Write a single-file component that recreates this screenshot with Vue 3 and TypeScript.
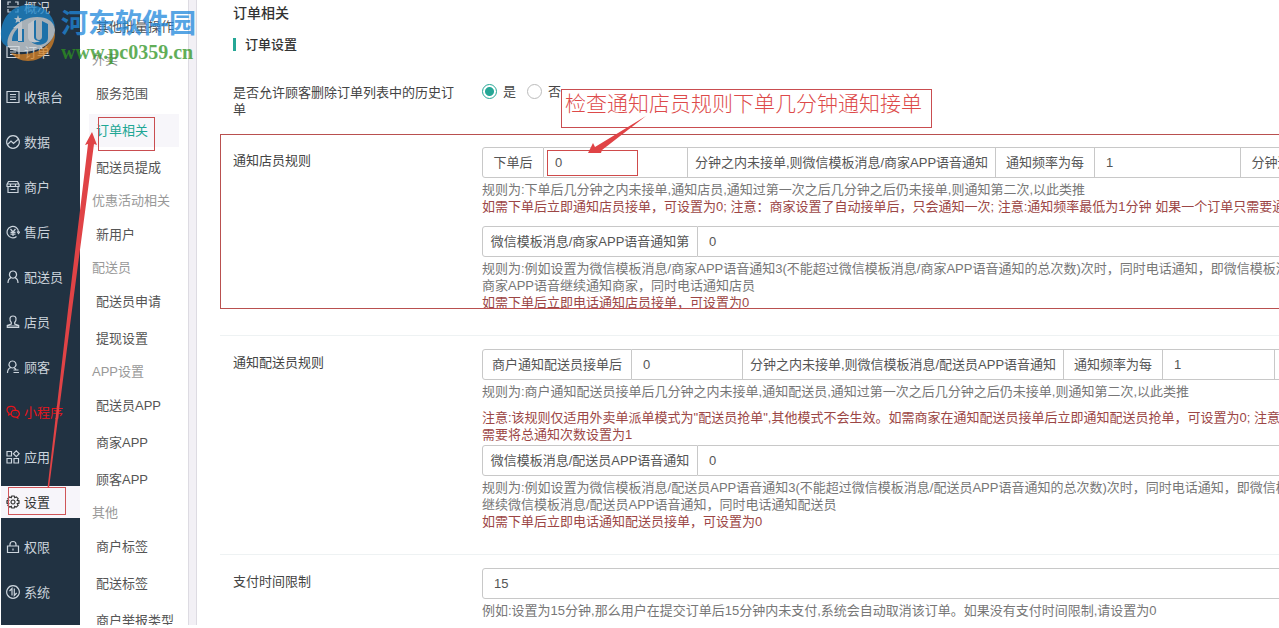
<script setup lang="ts">
interface NavItem { label: string; icon: string; state?: string }
interface SubItem { label: string; kind?: string }
interface Cell { type: 'text' | 'input'; value: string; width: number; label?: string; grow?: boolean }
interface Block { kind: 'group' | 'hint' | 'warn'; cells?: Cell[]; lines?: string[]; space?: string }
interface Row { title: string; id: string; blocks: Block[] }

const nav: NavItem[] = [
  { label: '概况', icon: 'M2 5V2h3M9 2h3v3M2 9v3h3M9 12h3V9M1 7h12' },
  { label: '订单', icon: 'M1 1.5h12v11H1zM4 4.500h6M4 7h6M4 9.500h6' },
  { label: '收银台', icon: 'M1 1.500h12v11H1zM4 4.500h6M4 7h6M4 9.500h6' },
  { label: '数据', icon: 'M7 .7a6.300 6.300 0 1 0 .01 0zM1.500 9.500L5 6l2.500 2.500L12 4.500' },
  { label: '商户', icon: 'M2.500 1.500h9l1.500 3v2H1v-2zM1 4h12M4.500 4v2.500M9.500 4v2.500M2 7v5.500h10V7M4.500 9.500h5' },
  { label: '售后', icon: 'M10.500 11.500A5.700 5.700 0 1 1 12.500 7M11 6.500l1.500 2 1.500-2M4.500 4L7 7l2.500-3M7 7v4M4.500 7.300h5M4.500 9.200h5' },
  { label: '配送员', icon: 'M7 1a3.500 3.500 0 0 1 2 6.400C8 8.200 6 8.200 5 7.400A3.500 3.500 0 0 1 7 1zM5 7.600C3 8.500 2 10.500 2 13M9 7.600c2 .9 3 2.900 3 5.400' },
  { label: '店员', icon: 'M7 1c4 0 3.500 4.500 1.700 6.500v1.500l4 1.500v2H1.300v-2l4-1.500V7.500C3.500 5.500 3 1 7 1zM1.300 11h11.400' },
  { label: '顾客', icon: 'M6.500 1a3.500 3.500 0 1 1-.01 0zM4.500 7.500C2.500 8.500 1.500 10.500 1.500 13M8 7.500l2 2M7.500 10h5M7.500 12.500h5.500' },
  { label: '小程序', icon: 'M9.500 5C9 0 1 .5 1 5c0 1.500.8 2.600 2 3.300L2.700 10l2-1M9 5.200c5 0 5.500 5 2.500 6.500l.3 1.300-1.800-.8C3.500 12.500 4 5.500 9 5.200zM3.800 4h.5M6.500 4H7M7.700 8h.5M10.500 8h.5' },
  { label: '应用', icon: 'M1 1.500h4.500v4.500H1zM1 8.500h4.500v4.500H1zM8 8.500h4.500v4.500H8zM10.300.8l2.900 2.900-2.900 2.900-2.900-2.900z' },
  { label: '设置', icon: 'M5.800 1h2.400l.5 1.700 1.600-.8 1.800 1.800-.9 1.600 1.800.5v2.400l-1.800.5.9 1.600-1.800 1.800-1.600-.8L8.200 13H5.800l-.5-1.700-1.600.8-1.800-1.800.9-1.600L1 8.200V5.800l1.800-.5-.9-1.600 1.800-1.800 1.600.8zM7 5a2 2 0 1 0 .01 0z', state: 'active' },
  { label: '权限', icon: 'M1.500 6h11v6.500h-11zM4 6V4.500a3 3 0 0 1 6 0V6M7 8.500v2' },
  { label: '系统', icon: 'M7 .7a6.300 6.300 0 1 0 .01 0zM6 10.500v-7L3.500 6M8.300 3.500v7L10.700 8' },
]

const sub: SubItem[] = [
  { label: '其他批量操作' },
  { label: '外卖', kind: 'head' },
  { label: '服务范围' },
  { label: '订单相关', kind: 'current' },
  { label: '配送员提成' },
  { label: '优惠活动相关', kind: 'head' },
  { label: '新用户' },
  { label: '配送员', kind: 'head' },
  { label: '配送员申请' },
  { label: '提现设置' },
  { label: 'APP设置', kind: 'head' },
  { label: '配送员APP' },
  { label: '商家APP' },
  { label: '顾客APP' },
  { label: '其他', kind: 'head' },
  { label: '商户标签' },
  { label: '配送标签' },
  { label: '商户举报类型' },
]

const rows: Row[] = [
  {
    title: '通知店员规则',
    id: 'clerk',
    blocks: [
      {
        kind: 'group',
        cells: [
          { type: 'text', value: '下单后', width: 62 },
          { type: 'input', value: '0', width: 144, label: '下单后分钟数' },
          { type: 'text', value: '分钟之内未接单,则微信模板消息/商家APP语音通知', width: 308 },
          { type: 'text', value: '通知频率为每', width: 99 },
          { type: 'input', value: '1', width: 146, label: '通知频率' },
          { type: 'text', value: '分钟通知一次', width: 100 },
        ],
      },
      { kind: 'hint', lines: ['规则为:下单后几分钟之内未接单,通知店员,通知过第一次之后几分钟之后仍未接单,则通知第二次,以此类推'] },
      { kind: 'warn', lines: ['如需下单后立即通知店员接单，可设置为0; 注意：商家设置了自动接单后，只会通知一次; 注意:通知频率最低为1分钟 如果一个订单只需要通知一次'] },
      {
        kind: 'group',
        space: 'wide',
        cells: [
          { type: 'text', value: '微信模板消息/商家APP语音通知第', width: 216 },
          { type: 'input', value: '0', width: 600, label: '电话通知次数', grow: true },
        ],
      },
      {
        kind: 'hint',
        lines: [
          '规则为:例如设置为微信模板消息/商家APP语音通知3(不能超过微信模板消息/商家APP语音通知的总次数)次时，同时电话通知，即微信模板消息/',
          '商家APP语音继续通知商家，同时电话通知店员',
        ],
      },
      { kind: 'warn', lines: ['如需下单后立即电话通知店员接单，可设置为0'] },
    ],
  },
  {
    title: '通知配送员规则',
    id: 'rider',
    blocks: [
      {
        kind: 'group',
        cells: [
          { type: 'text', value: '商户通知配送员接单后', width: 150 },
          { type: 'input', value: '0', width: 111, label: '接单后分钟数' },
          { type: 'text', value: '分钟之内未接单,则微信模板消息/配送员APP语音通知', width: 321 },
          { type: 'text', value: '通知频率为每', width: 99 },
          { type: 'input', value: '1', width: 112, label: '通知频率' },
          { type: 'text', value: '分钟通知一次', width: 100 },
        ],
      },
      { kind: 'hint', lines: ['规则为:商户通知配送员接单后几分钟之内未接单,通知配送员,通知过第一次之后几分钟之后仍未接单,则通知第二次,以此类推'] },
      {
        kind: 'warn',
        space: 'mid',
        lines: [
          '注意:该规则仅适用外卖单派单模式为"配送员抢单",其他模式不会生效。如需商家在通知配送员接单后立即通知配送员抢单，可设置为0; 注意:通知',
          '需要将总通知次数设置为1',
        ],
      },
      {
        kind: 'group',
        space: 'thin',
        cells: [
          { type: 'text', value: '微信模板消息/配送员APP语音通知', width: 216 },
          { type: 'input', value: '0', width: 600, label: '电话通知次数', grow: true },
        ],
      },
      {
        kind: 'hint',
        lines: [
          '规则为:例如设置为微信模板消息/配送员APP语音通知3(不能超过微信模板消息/配送员APP语音通知的总次数)次时，同时电话通知，即微信模板消息',
          '继续微信模板消息/配送员APP语音通知，同时电话通知配送员',
        ],
      },
      { kind: 'warn', lines: ['如需下单后立即电话通知配送员接单，可设置为0'] },
    ],
  },
  {
    title: '支付时间限制',
    id: 'pay',
    blocks: [
      { kind: 'group', cells: [{ type: 'input', value: '15', width: 600, label: '支付时间限制', grow: true }] },
      { kind: 'hint', lines: ['例如:设置为15分钟,那么用户在提交订单后15分钟内未支付,系统会自动取消该订单。如果没有支付时间限制,请设置为0'] },
    ],
  },
]
</script>

<template>
  <div class="app">
    <nav class="nav" aria-label="主导航">
      <a v-for="n in nav" :key="n.label" href="#" :class="['nav-item', n.state, { hot: n.label === '小程序' }]">
        <svg class="icon" viewBox="0 0 14 14" aria-hidden="true"><path :d="n.icon" /></svg>
        <span>{{ n.label }}</span>
      </a>
    </nav>

    <nav class="sub" aria-label="设置">
      <template v-for="s in sub" :key="s.label">
        <h3 v-if="s.kind === 'head'" class="sub-head">{{ s.label }}</h3>
        <a v-else href="#" :class="['sub-item', s.kind]">{{ s.label }}</a>
      </template>
    </nav>
    <div class="gutter"></div>

    <main class="main">
      <h1 class="title">订单相关</h1>
      <h2 class="section"><span>订单设置</span></h2>

      <div class="row first">
        <div class="label">是否允许顾客删除订单列表中的历史订单</div>
        <div class="radios">
          <label><input type="radio" name="allow" value="1" checked /><span>是</span></label>
          <label><input type="radio" name="allow" value="0" /><span>否</span></label>
        </div>
      </div>

      <div v-for="r in rows" :key="r.id" class="row ruled">
        <div class="label">{{ r.title }}</div>
        <div class="field">
          <template v-for="(b, i) in r.blocks" :key="i">
            <div v-if="b.kind === 'group'" :class="['group', b.space]">
              <template v-for="(c, j) in b.cells" :key="j">
                <span v-if="c.type === 'text'" class="cell addon" :style="{ flexBasis: c.width + 'px' }">{{ c.value }}</span>
                <input
                  v-else
                  type="text"
                  :class="['cell', { grow: c.grow }]"
                  :value="c.value"
                  :aria-label="c.label"
                  :style="{ flexBasis: c.width + 'px' }"
                />
              </template>
            </div>
            <p v-else :class="[b.kind, b.space]">
              <span v-for="l in b.lines" :key="l">{{ l }}</span>
            </p>
          </template>
        </div>
      </div>
    </main>

    <div class="watermark">
      <svg class="logo" viewBox="0 0 56 62" aria-hidden="true">
        <path d="M1 35C0 16 12 3 29 3c14 0 24 9 26 22C44 13 22 14 11 31c-3 5-4 9-3 14-4-2-7-5-7-10z" fill="#1c86cc" />
        <path d="M55 30c1 16-12 29-27 29-7 0-13-3-17-8 18 4 38-2 44-21z" fill="#d98324" />
        <path d="M8 45C4 34 18 15 37 15c10 0 17 4 18 13-1 15-18 22-34 22-5 0-10-2-13-5z" fill="#d4dade" />
        <path d="M12 39c0-6 3-10 6-13v13zM18 27h6v13h-6zM30 21l6-3v17c0 4 6 4 6 0V19l6 3v14c0 9-18 9-18 0z" fill="#1c86cc" />
        <path d="M13 26l9-7v20h-4V26zM28 22l6-4v17c0 3 3 4 6 4-6 3-12 1-12-4z" fill="#f4f7f9" />
        <path d="M18 13l1 3 3 .2-2.300 1.900.8 2.900-2.500-1.600-2.500 1.600.8-2.900-2.300-1.900 3-.2z" fill="#e8eef2" />
      </svg>
      <div class="wm-text">
        <span class="wm-name">河东软件园</span>
        <span class="wm-url">www.pc0359.cn</span>
      </div>
    </div>

    <div class="callout">检查通知店员规则下单几分钟通知接单</div>
    <svg class="marks" aria-hidden="true">
      <g fill="none" stroke="#b9504f">
        <rect x="220.500" y="134.500" width="4000" height="174" />
        <rect x="547.500" y="150.500" width="90" height="25" stroke="#cf4b4b" />
        <rect x="98.500" y="117.500" width="56" height="33" stroke="#c94d50" />
        <rect x="8.500" y="487.500" width="57" height="27" stroke="#cf5558" />
      </g>
      <g fill="#e04346">
        <path d="M92 132l5 13-3-1-22 166-23 178h-1.500L68 310l20-166-3 1z" />
        <path d="M588 153l5-10 2 4 51-31-44 34-1 3z" />
      </g>
    </svg>
  </div>
</template>

<style>
body {
  margin: 0;
  background: #fff;
}
</style>

<style scoped>
.app {
  position: relative;
  display: flex;
  height: 100vh;
  box-sizing: border-box;
  padding: 0 0 3px 1px;
  overflow: hidden;
  font: 13px/17px "Liberation Sans", "Noto Sans CJK SC", sans-serif;
  color: #444;
  background: #fff;
}
a {
  text-decoration: none;
}
h1, h2, h3, p {
  margin: 0;
  font-size: inherit;
  font-weight: 400;
}
.nav {
  flex: 0 0 79px;
  background: #213242;
  overflow: hidden;
}
.nav-item {
  display: flex;
  align-items: center;
  gap: 4px;
  height: 32px;
  margin-bottom: 13px;
  padding-left: 5px;
  color: #ccd4dc;
  white-space: nowrap;
}
.nav-item:first-child {
  margin-top: -9px;
}
.nav-item.hot {
  color: #e8141c;
}
.nav-item.active {
  color: #333;
  background: #f7f5fa;
}
.icon {
  flex: none;
  width: 14px;
  height: 14px;
  fill: none;
  stroke: currentColor;
  stroke-width: 1.2;
}
.sub {
  flex: 0 0 108px;
  box-sizing: border-box;
  padding: 10px 9px 0;
  overflow: hidden;
  white-space: nowrap;
}
.sub-item {
  display: block;
  height: 33px;
  margin-bottom: 4px;
  padding-left: 7px;
  line-height: 33px;
  color: #555;
}
.sub-item.current {
  color: #1fa795;
  background: #f7f6fa;
}
.sub-head {
  height: 30px;
  padding-left: 3px;
  line-height: 26px;
  color: #999;
}
.gutter {
  flex: 0 0 7px;
  border: solid #dddbe2;
  border-width: 0 1px;
  background: #f2f0f5;
}
.main {
  flex: 1;
  min-width: 0;
  padding-left: 23px;
  overflow: hidden;
}
.title {
  padding-left: 13px;
  font-size: 14px;
  font-weight: 500;
  line-height: 26px;
  color: #333;
}
.section {
  display: flex;
  align-items: center;
  height: 36px;
  padding-left: 13px;
  font-weight: 500;
  color: #333;
}
.section::before {
  content: "";
  width: 3px;
  height: 13px;
  margin-right: 9px;
  background: #26a796;
}
.row {
  display: grid;
  grid-template-columns: 262px minmax(0, 1fr);
}
.label {
  padding: 5px 27px 0 13px;
  color: #444;
}
.first {
  padding: 17px 0 29px;
}
.radios {
  display: flex;
  align-items: flex-start;
  gap: 11px;
  padding-top: 4px;
}
.radios label {
  display: flex;
  align-items: center;
  gap: 6px;
}
.radios input {
  appearance: none;
  width: 15px;
  height: 15px;
  margin: 0;
  border: 1px solid #bbb;
  border-radius: 50%;
  background: #fff;
}
.radios input:checked {
  border-color: #26a796;
  background: radial-gradient(circle, #26a796 4px, #fff 5px);
}
.ruled + .ruled {
  padding-top: 13px;
  border-top: 1px solid #eef2f3;
}
.field {
  margin-right: -12px;
  padding-bottom: 24px;
  white-space: nowrap;
}
.group {
  display: flex;
  margin-bottom: 3px;
}
.group.wide {
  margin-top: 11px;
}
.group.thin {
  margin-top: 2px;
}
.cell {
  flex: 0 0 auto;
  box-sizing: border-box;
  min-width: 0;
  height: 31px;
  margin: 0;
  padding: 0 11px;
  border: 1px solid #c8c8c8;
  border-left-width: 0;
  border-radius: 0;
  background: #fff;
  font: inherit;
  color: #555;
}
.cell:first-child {
  border-left-width: 1px;
  border-radius: 3px 0 0 3px;
}
.cell.grow {
  flex-grow: 1;
}
.addon {
  display: flex;
  align-items: center;
  justify-content: center;
  padding: 0 4px;
}
.hint {
  color: #777;
}
.warn {
  color: #9c4645;
}
.hint span,
.warn span {
  display: block;
}
.mid {
  margin-top: 9px;
}
.watermark {
  position: absolute;
  top: 2px;
  left: 0;
  display: flex;
  align-items: flex-start;
  gap: 5px;
  pointer-events: none;
}
.logo {
  width: 56px;
  height: 62px;
  opacity: 0.75;
}
.wm-text {
  display: flex;
  flex-direction: column;
  padding-top: 6px;
  opacity: 0.75;
}
.wm-name {
  font-size: 27px;
  font-weight: 700;
  line-height: 32px;
  color: #2088dc;
}
.wm-url {
  font: 700 20px/24px "Liberation Serif", serif;
  color: #2d941f;
}
.callout {
  position: absolute;
  top: 89px;
  left: 561px;
  box-sizing: border-box;
  height: 39px;
  padding: 0 9px 0 3px;
  border: 1px solid #c94d50;
  font: 300 21px/24px "Noto Sans CJK SC", sans-serif;
  color: #dd4a4a;
  white-space: nowrap;
}
.marks {
  position: absolute;
  inset: 0;
  width: 100%;
  height: 100%;
  pointer-events: none;
}
</style>
